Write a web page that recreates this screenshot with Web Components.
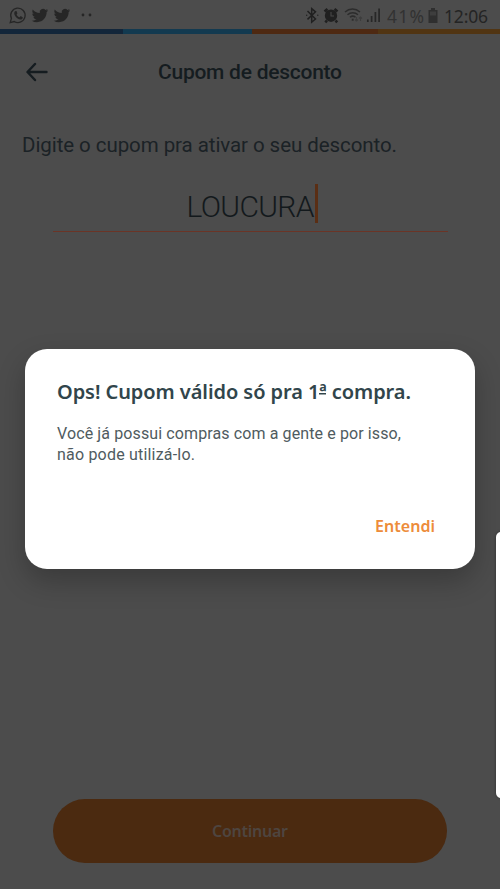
<!DOCTYPE html>
<html lang="pt-BR"><head><meta charset="utf-8"><title>Cupom de desconto</title>
<style>html,body{margin:0;height:100%;overflow:hidden;background:#4c4c4c}</style></head>
<body><coupon-app></coupon-app>
<script>
const define=(name,html,setup)=>customElements.define(name,class extends HTMLElement{
  constructor(){super();this.attachShadow({mode:'open'}).innerHTML=html;}
  connectedCallback(){if(setup)setup(this);}
});
// One line of text, tracked so that it fills the width given in its "w" attribute.
define('fit-text',`<style>:host{display:block;white-space:nowrap}span{display:inline-block}</style><span><slot></slot></span>`,el=>{
  const s=el.shadowRoot.querySelector('span');
  const n=[...el.textContent].length, w=+el.getAttribute('w');
  el.style.width=w+'px';
  s.style.letterSpacing=((w-s.getBoundingClientRect().width)/(n-1))+'px';
});
define('status-bar',`<style>
:host{display:flex;height:29px;padding:0 12px 0 9px;align-items:center;color:#242424;font-family:"Noto Sans",sans-serif;box-sizing:border-box}
svg{display:block;flex:none}.sp{flex:1}.t{font-size:17.500px;line-height:20px;margin-top:2px}
.pct{color:#323232;margin-left:5px}.time{margin-left:6px}
</style>
<svg width="90" height="29" viewBox="0 0 90 29"><g fill="none" stroke="#262626" stroke-width="1.3"><path d="M1.2 22.6 2.4 18.4A7.2 7.2 0 1 1 5.2 21.5Z"/></g>
<path fill="#262626" d="M5.8 11.5c-2 2.3 1.7 8.2 6.2 7.9 1.5-.1 2-1.5 1.700-2.200l-2-1.100-1.100 1.200c-1.300-.4-2.500-1.600-3-2.900l.8-1-.8-2.100c-.5-.5-1.300-.3-1.800.2z"/>
<g id="a" fill="#262626"><path transform="translate(22.8 7.2) scale(.69)" d="M23.6 4.6c-.9.4-1.8.7-2.8.8 1-.6 1.8-1.6 2.2-2.7-1 .6-2 1-3.100 1.200A4.900 4.900 0 0 0 11.500 8.400C7.400 8.200 3.800 6.200 1.400 3.200.1 5.400.8 8.200 2.900 9.700c-.8 0-1.600-.2-2.200-.6 0 2.300 1.600 4.400 3.900 4.900-.7.200-1.500.2-2.200.1.600 2 2.400 3.400 4.600 3.400A9.900 9.900 0 0 1 0 19.500a13.900 13.900 0 0 0 7.500 2.200c9.100 0 14.300-7.700 14-14.600 1-.7 1.800-1.600 2.100-2.500z"/></g>
<use href="#a" x="22"/><circle cx="74" cy="15" r="1.400" fill="#262626"/><circle cx="81" cy="15" r="1.400" fill="#262626"/></svg>
<div class="sp"></div>
<svg width="77" height="29" viewBox="304 0 77 29"><g fill="none" stroke="#202020"><path stroke-width="1.500" d="m306.500 11 8 8-3.800 3.200v-13.500l3.800 3.200-8 7.500"/><circle cx="305.700" cy="15.300" r=".7" fill="#202020" stroke="none"/><circle cx="316.800" cy="15.300" r=".7" fill="#202020" stroke="none"/>
<circle cx="330" cy="15.700" r="6.200" fill="#202020" stroke="none"/><path stroke-width="2.600" d="m323.500 11.500 3-2.500m10 2.500-3-2.500m-7.500 11.500-1.700 1.800m10.200-1.800 1.700 1.800"/><path stroke="#484848" stroke-width="1.100" d="M330 12v4h3"/>
<g stroke="#2c2c2c" stroke-width="1.500"><path d="M344 12c4.500-4 10.500-4 15 0M346.500 14.800c3-2.600 7.500-2.600 10.500 0M349 17.300c1.500-1.300 4-1.300 5.500 0"/><path stroke-width="1.900" d="M351.700 18.700v2"/><path stroke="#3d3d3d" stroke-width="1.100" d="M355.500 17v4m-1.500-1.500 1.500 1.500 1.500-1.500M359.500 21v-4m-1.500 1.500 1.500-1.500 1.500 1.500"/></g>
<path stroke="#272727" stroke-width="1.700" d="M366.800 19.500v2.500m3.800-6v6m3.800-10v10m3.700-13.500v13.500"/></g></svg>
<fit-text class="t pct" w="37">41%</fit-text>
<svg width="10" height="15" viewBox="0 0 10 15" style="margin:2px 0 0 4px"><path fill="#2f2f2f" d="M3 0h4v2h2.500v13H.5V2H3z"/><path fill="#3e3e3e" d="M2 3.500h6v4H2z"/></svg>
<fit-text class="t time" w="44">12:06</fit-text>`);
define('brand-stripe',`<style>:host{display:grid;grid-template-columns:123px 129px 126px 1fr;height:5px}i{background:#513513}i:nth-of-type(1){background:#13263a}i:nth-of-type(2){background:#133a50}i:nth-of-type(3){background:#4e2912}</style><i></i><i></i><i></i><i></i>`);
define('app-header',`<style>:host{display:grid;grid-template-columns:158px auto 1fr;height:76px;align-items:center;font:500 21px/28px Roboto,sans-serif;color:#151c20;box-sizing:border-box}svg{display:block;margin:-1px 0 0 26px}</style>
<svg width="23" height="20" viewBox="0 0 23 20"><path d="M20.500 10H2M9 2 1.500 10 9 18" fill="none" stroke="#151c20" stroke-width="2.400" stroke-linecap="round" stroke-linejoin="round"/></svg><fit-text w="184">Cupom de desconto</fit-text>`);
define('coupon-field',`<style>:host{display:flex;width:395px;height:48px;margin:0 auto;justify-content:center;align-items:flex-start;border-bottom:1px solid #6b3426;font:300 30px/44px Roboto,sans-serif;color:#13191c;box-sizing:border-box}i{width:3px;height:39px;background:#5a2e14}fit-text{margin:1px 0 0 4px}</style><fit-text w="128">LOUCURA</fit-text><i></i>`);
define('primary-button',`<style>:host{display:flex;width:394px;height:64px;border-radius:32px;background:#4b2a10;margin:auto auto 26px;align-items:center;justify-content:center;font:600 16px/24px "Noto Sans",sans-serif;color:#4e4540}</style><fit-text w="76">Continuar</fit-text>`);
define('alert-dialog',`<style>
:host{position:absolute;left:25px;top:349px;width:450px;height:220px;border-radius:22px;background:#fff;box-shadow:0 12px 28px rgba(0,0,0,.24);box-sizing:border-box;padding:29px 40px 31px 32px;display:flex;flex-direction:column;color:#31454b}
h2{margin:0;font:600 20px/28px "Noto Sans",sans-serif}
u{text-decoration:none;background:linear-gradient(#31454b,#31454b) 0 15px/7px 1.500px no-repeat}
.b{margin-top:17px;font:400 16px/21px Roboto,sans-serif;color:#4f5b60}
button{all:unset;margin:auto 0 0 auto;font:600 16px/24px "Noto Sans",sans-serif;color:#ed8c3a}
</style><h2><fit-text w="354">Ops! Cupom válido só pra 1<u>ª</u> compra.</fit-text></h2>
<div class="b"><fit-text w="344">Você já possui compras com a gente e por isso,</fit-text><fit-text w="138">não pode utilizá-lo.</fit-text></div>
<button><fit-text w="60">Entendi</fit-text></button>`);
define('coupon-app',`<style>
:host{display:flex;flex-direction:column;position:relative;width:500px;height:889px;background:#4c4c4c;overflow:hidden}
.lead{margin:21px 0 0 22px;font:400 20.500px/28px Roboto,sans-serif;color:#1b2226}
coupon-field{margin-top:25px}
.edge{position:absolute;left:496px;top:532px;width:12px;height:266px;border-radius:5px;background:#fff;box-shadow:0 0 3px rgba(0,0,0,.4)}
</style><status-bar></status-bar><brand-stripe></brand-stripe><app-header></app-header>
<fit-text class="lead" w="375">Digite o cupom pra ativar o seu desconto.</fit-text>
<coupon-field></coupon-field><primary-button></primary-button>
<alert-dialog role="alertdialog"></alert-dialog><div class="edge"></div>`);
</script></body></html>
